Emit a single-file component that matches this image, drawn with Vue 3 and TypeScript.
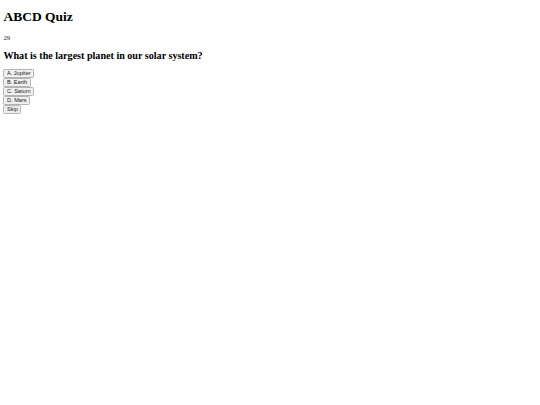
<script setup lang="ts">
const options: string[] = ['A. Jupiter', 'B. Earth', 'C. Saturn', 'D. Mars', 'Skip']
</script>

<template>
  <div class="quiz">
    <h1 class="title">ABCD Quiz</h1>
    <p class="timer">29</p>
    <h2 class="question">What is the largest planet in our solar system?</h2>
    <div class="options">
      <div v-for="o in options" :key="o" class="row"><button type="button" class="btn">{{ o }}</button></div>
    </div>
  </div>
</template>

<style scoped>
.quiz { padding: 0 3.4px; font-family: "Liberation Serif", "Times New Roman", serif; color: #000; }
.title { font-size: 13.5px; font-weight: bold; margin: 0; padding-top: 9px; line-height: 15px; }
.timer { font-size: 6.75px; margin: 9.5px 0 0; line-height: 8px; color: #222; }
.question { font-size: 10.1px; font-weight: bold; margin: 8.5px 0 0; line-height: 12px; }
.options { margin-top: 7px; }
.row { height: 9px; display: flex; }
.btn { font-family: "Liberation Sans", Arial, sans-serif; font-size: 5.6px; height: 9px; line-height: 7px; padding: 0 2.6px; border: 1px solid #b4b4b4; border-radius: 1.5px; background: #efefef; color: #222; box-sizing: border-box; }
</style>
